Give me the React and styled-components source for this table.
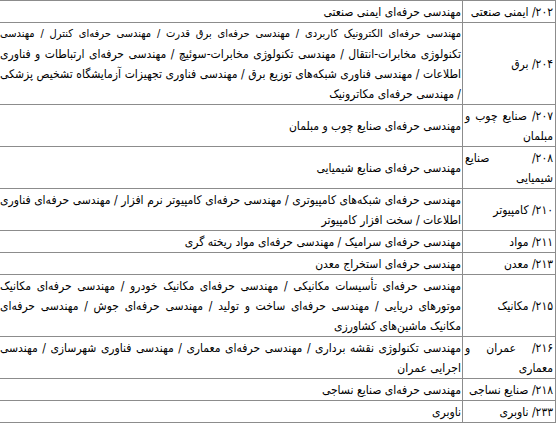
import React from 'react';
import styled, { createGlobalStyle } from 'styled-components';

const GlobalStyle = createGlobalStyle`
  html, body {
    margin: 0;
    padding: 0;
    background: #ffffff;
  }
  body {
    font-family: "DejaVu Sans Condensed", "DejaVu Sans", Tahoma, sans-serif;
    overflow: hidden;
  }
`;

const Page = styled.div`
  width: 557px;
  height: 423px;
  overflow: hidden;
  direction: rtl;
  background: #fff;
`;

const Table = styled.table`
  width: 558px;
  margin-right: 1px;
  border-collapse: collapse;
  table-layout: fixed;
  direction: rtl;
  font-size: 12px;
  line-height: 20px;
  color: #000;
`;

const Cell = styled.td`
  border: 1px solid #8c8c8c;
  padding: 1px ${(p) => (p.$major ? '2px' : '1px')} 0;
  vertical-align: middle;
  width: ${(p) => (p.$major ? '88px' : 'auto')};
`;

// each visual line of the reference, justified except the last one
const Line = styled.span`
  display: block;
  font-size: ${(p) => (p.$dense ? '11px' : 'inherit')};
  text-align: right;
  text-align-last: ${(p) => (p.$fill ? 'justify' : 'right')};
`;

// a leading '~' marks a line that is packed tighter in the source
const rows = [
  [['۲۰۲/ ایمنی صنعتی'], ['مهندسی حرفه‌ای ایمنی صنعتی']],
  [
    ['۲۰۴/ برق'],
    [
      '~مهندسی حرفه‌ای الکترونیک کاربردی / مهندسی حرفه‌ای برق قدرت / مهندسی حرفه‌ای کنترل / مهندسی',
      'تکنولوژی مخابرات-انتقال / مهندسی تکنولوژی مخابرات-سوئیچ / مهندسی حرفه‌ای ارتباطات و فناوری',
      'اطلاعات / مهندسی فناوری شبکه‌های توزیع برق / مهندسی فناوری تجهیزات آزمایشگاه تشخیص پزشکی',
      '/ مهندسی حرفه‌ای مکاترونیک',
    ],
  ],
  [['۲۰۷/ صنایع چوب و', 'مبلمان'], ['مهندسی حرفه‌ای صنایع چوب و مبلمان']],
  [['۲۰۸/ صنایع', 'شیمیایی'], ['مهندسی حرفه‌ای صنایع شیمیایی']],
  [
    ['۲۱۰/ کامپیوتر'],
    [
      'مهندسی حرفه‌ای شبکه‌های کامپیوتری / مهندسی حرفه‌ای کامپیوتر نرم افزار / مهندسی حرفه‌ای فناوری',
      'اطلاعات / سخت افزار کامپیوتر',
    ],
  ],
  [['۲۱۱/ مواد'], ['مهندسی حرفه‌ای سرامیک / مهندسی حرفه‌ای مواد ریخته گری']],
  [['۲۱۳/ معدن'], ['مهندسی حرفه‌ای استخراج معدن']],
  [
    ['۲۱۵/ مکانیک'],
    [
      'مهندسی حرفه‌ای تأسیسات مکانیکی / مهندسی حرفه‌ای مکانیک خودرو / مهندسی حرفه‌ای مکانیک',
      'موتورهای دریایی / مهندسی حرفه‌ای ساخت و تولید / مهندسی حرفه‌ای جوش / مهندسی حرفه‌ای',
      'مکانیک ماشین‌های کشاورزی',
    ],
  ],
  [
    ['۲۱۶/ عمران و', 'معماری'],
    [
      'مهندسی تکنولوژی نقشه برداری / مهندسی حرفه‌ای معماری / مهندسی فناوری شهرسازی / مهندسی',
      'اجرایی عمران',
    ],
  ],
  [['۲۱۸/ صنایع نساجی'], ['مهندسی حرفه‌ای صنایع نساجی']],
  [['۲۳۳/ ناوبری'], ['ناوبری']],
];

const Lines = ({ items }) =>
  items.map((text, i) => {
    const dense = text.startsWith('~');
    return (
      <Line key={i} $fill={i < items.length - 1} $dense={dense}>
        {dense ? text.slice(1) : text}
      </Line>
    );
  });

export default function App() {
  return (
    <>
      <GlobalStyle />
      <Page>
        <Table>
          <tbody>
            {rows.map(([field, majors]) => (
              <tr key={field[0]}>
                <Cell $major>
                  <Lines items={field} />
                </Cell>
                <Cell>
                  <Lines items={majors} />
                </Cell>
              </tr>
            ))}
          </tbody>
        </Table>
      </Page>
    </>
  );
}
